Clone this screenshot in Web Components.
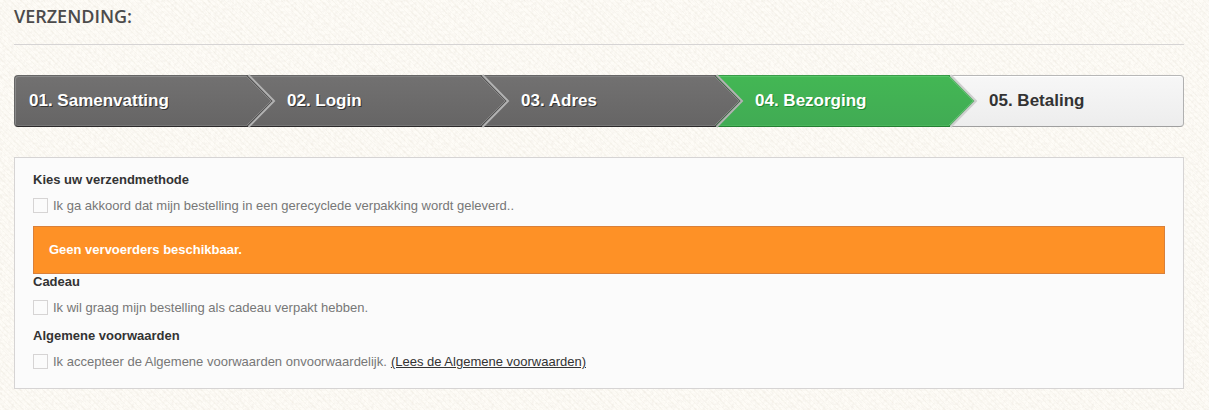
<!DOCTYPE html>
<html lang="nl">
<head>
<meta charset="utf-8">
<title>Verzending</title>
<style>
body {
  margin: 0;
  font: 13px/16px "Liberation Sans", Arial, sans-serif;
  color: #777;
  background-color: #fefcf7;
  background-image: url("data:image/svg+xml,%3Csvg xmlns='http://www.w3.org/2000/svg' width='120' height='120'%3E%3Cfilter id='n' x='0' y='0' width='100%25' height='100%25'%3E%3CfeTurbulence type='fractalNoise' baseFrequency='.35' numOctaves='3' stitchTiles='stitch'/%3E%3CfeColorMatrix values='0 0 0 0 .6 0 0 0 0 .55 0 0 0 0 .46 0 .35 0 0 -.13'/%3E%3C/filter%3E%3Crect width='120' height='120' filter='url(%23n)'/%3E%3C/svg%3E"),
    repeating-linear-gradient(45deg, rgba(170,155,120,.05) 0 1px, transparent 1px 4px);
}
</style>
</head>
<body>
<checkout-page>
  <page-title>Verzending:</page-title>
  <order-steps>
    <order-step state="done" first>01. Samenvatting</order-step>
    <order-step state="done">02. Login</order-step>
    <order-step state="done">03. Adres</order-step>
    <order-step state="current">04. Bezorging</order-step>
    <order-step state="todo" last>05. Betaling</order-step>
  </order-steps>
  <delivery-panel>
    <option-group>
      <span slot="title">Kies uw verzendmethode</span>
      <check-option>Ik ga akkoord dat mijn bestelling in een gerecyclede verpakking wordt geleverd..</check-option>
    </option-group>
    <warning-box>Geen vervoerders beschikbaar.</warning-box>
    <option-group>
      <span slot="title">Cadeau</span>
      <check-option>Ik wil graag mijn bestelling als cadeau verpakt hebben.</check-option>
    </option-group>
    <option-group>
      <span slot="title">Algemene voorwaarden</span>
      <check-option>Ik accepteer de Algemene voorwaarden onvoorwaardelijk.<terms-link slot="extra">(Lees de Algemene voorwaarden)</terms-link></check-option>
    </option-group>
  </delivery-panel>
</checkout-page>

<script>
function define(name, html, setup) {
  customElements.define(name, class extends HTMLElement {
    constructor() {
      super();
      this.attachShadow({ mode: "open" }).innerHTML = html;
    }
    connectedCallback() { if (setup) setup(this, this.shadowRoot); }
  });
}

define("checkout-page", `
<style>
:host { display: block; }
main { padding: 4px 25px 21px 14px; }
</style>
<main><slot></slot></main>`);

define("page-title", `
<style>
:host { display: block; }
h1 { margin: 0 0 30px; padding-bottom: 16px; border-bottom: 1px solid #d6d4d4;
  font: 600 18px/24px "Open Sans", sans-serif; color: #4c4b4b; text-transform: uppercase; }
</style>
<h1><slot></slot></h1>`);

define("order-steps", `
<style>
:host { display: block; margin-bottom: 30px; }
nav { display: grid; grid-template-columns: repeat(5, 1fr); }
</style>
<nav aria-label="Bestelstappen"><slot></slot></nav>`);

define("order-step", `
<style>
:host { display: block; position: relative; min-width: 0; }
.step { box-sizing: border-box; height: 52px; padding: 0 39px; border: 0 solid; border-width: 1px 0;
  font-weight: bold; font-size: 17px; line-height: 50px; white-space: nowrap; }
:host([state="done"]) .step { color: #fff; text-shadow: 1px 1px #333; border-color: #666 #2c2a2b #2c2a2b #666;
  background: linear-gradient(#727171, #666565); box-shadow: inset 0 1px #828282, inset 0 -1px #777; }
:host([state="current"]) .step { color: #fff; text-shadow: 1px 1px #208931; border-color: #399b49 #247f32 #247f32;
  background: linear-gradient(#43b754, #41ab54); box-shadow: inset 0 1px #55c567, inset 0 -1px #4bb75c; }
:host([state="todo"]) .step { color: #333; border-color: #b7b7b7 #b0b0b0 #9f9f9f;
  background: linear-gradient(#f7f7f7, #ededed); box-shadow: inset 0 1px #fff; }
:host([first]) .step { padding-left: 14px; border-left-width: 1px; border-radius: 4px 0 0 4px;
  box-shadow: inset 1px 1px #8a8a8a, inset 0 -1px #777; }
:host([last]) .step { border-right-width: 1px; border-radius: 0 4px 4px 0; }
svg { position: absolute; z-index: 1; top: 0; left: 100%; width: 30px; height: 52px; display: block; overflow: visible; }
:host([last]) svg { display: none; }
.body { fill: url(#g); }
.outer, .edge, .inner { fill: none; }
.outer { stroke: #848383; stroke-width: 1; }
.edge { stroke: #3c3c3c; stroke-width: 1; }
.inner { stroke: #b2b2b2; stroke-width: 2; }
.a { stop-color: #727171; } .b { stop-color: #666565; }
:host([state="current"]) .a { stop-color: #43b754; }
:host([state="current"]) .b { stop-color: #41ab54; }
:host([state="current"]) .edge { stroke: #288a38; }
:host([state="current"]) .outer { stroke: #5dc36e; }
:host([state="current"]) .inner { stroke: #cfcfcf; }
</style>
<div class="step"><slot></slot></div>
<svg viewBox="0 0 30 52" aria-hidden="true">
  <defs><linearGradient id="g" x1="0" y1="0" x2="0" y2="1"><stop class="a"/><stop class="b" offset="1"/></linearGradient></defs>
  <path class="body" d="M-1 1 24 26 -1 51Z"/>
  <path class="outer" d="M-1 2 23 26 -1 50"/>
  <path class="edge" d="M-1 .5 24.500 26 -1 51.500"/>
  <path class="inner" d="M.5 0 26 26 .5 52"/>
</svg>`, (host, root) => {
  if (host.getAttribute("state") === "current") root.querySelector(".step").setAttribute("aria-current", "step");
});

define("delivery-panel", `
<style>
:host { display: block; }
section { padding: 14px 18px 18px; border: 1px solid #d6d4d4; background: #fbfbfb; }
</style>
<section><slot></slot></section>`);

define("option-group", `
<style>
:host { display: block; margin-bottom: 12px; }
:host(:last-of-type) { margin-bottom: 0; }
h2 { margin: 0 0 9px; font-size: 13px; line-height: 15px; font-weight: bold; color: #333; }
</style>
<h2><slot name="title"></slot></h2>
<slot></slot>`);

define("check-option", `
<style>
:host { display: flex; align-items: flex-end; min-height: 18px; }
input { appearance: none; flex: none; align-self: center; box-sizing: border-box; width: 15px; height: 15px;
  margin: 0 5px 0 0; border: 1px solid #d6d4d4; background: #fbfbfb; }
input:checked { background: #777; box-shadow: inset 0 0 0 2px #fbfbfb; }
</style>
<input type="checkbox" id="box"><label for="box"><slot></slot></label><slot name="extra"></slot>`);

define("terms-link", `
<style>
:host { display: inline; margin-left: 4px; }
a { color: #333; text-decoration: underline; }
</style>
<a href="#voorwaarden"><slot></slot></a>`);

define("warning-box", `
<style>
:host { display: block; }
p { margin: 0; padding: 15px; border: 1px solid #d9803a; background: #fe9126; color: #fff; font-weight: bold; }
</style>
<p role="alert"><slot></slot></p>`);
</script>
</body>
</html>
